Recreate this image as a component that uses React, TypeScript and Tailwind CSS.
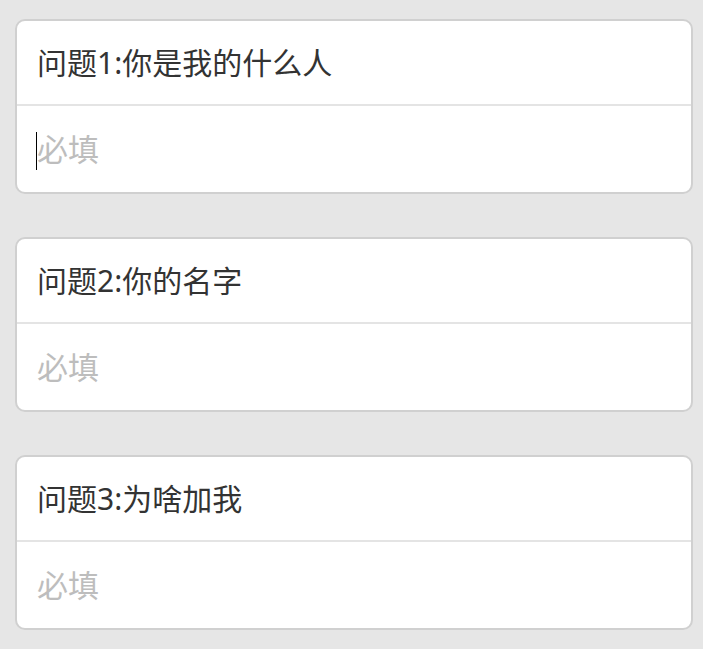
const questions = [
  { id: 1, title: "问题1:你是我的什么人" },
  { id: 2, title: "问题2:你的名字" },
  { id: 3, title: "问题3:为啥加我" },
];

const QuestionCard = ({ title, focused }: { title: string; focused?: boolean }) => {
  return (
    <div className="ml-[15px] mr-[10px] rounded-[10px] border-2 border-[#d0d0d0] bg-white overflow-hidden">
      <div className="h-[85px] flex items-center px-[20px] text-[30px] text-[#333] border-b-2 border-[#e4e4e4]">
        {title}
      </div>
      <div className="relative h-[86px] flex items-center px-[20px]">
        <input
          type="text"
          placeholder="必填"
          className="w-full bg-transparent outline-none text-[31px] text-[#333] placeholder:text-[#bdbdbd] caret-transparent"
        />
        {focused && (
          <span className="absolute left-[19px] top-[26px] h-[38px] w-px bg-black" />
        )}
      </div>
    </div>
  );
};

export default function App() {
  return (
    <div
      className="min-h-[649px] bg-[#e6e6e6] pt-[19px] pb-[18px] flex flex-col gap-[43px]"
      style={{ fontFamily: '"Noto Sans", "Noto Sans CJK SC", sans-serif' }}
    >
      {questions.map((q) => (
        <QuestionCard key={q.id} title={q.title} focused={q.id === 1} />
      ))}
    </div>
  );
}
